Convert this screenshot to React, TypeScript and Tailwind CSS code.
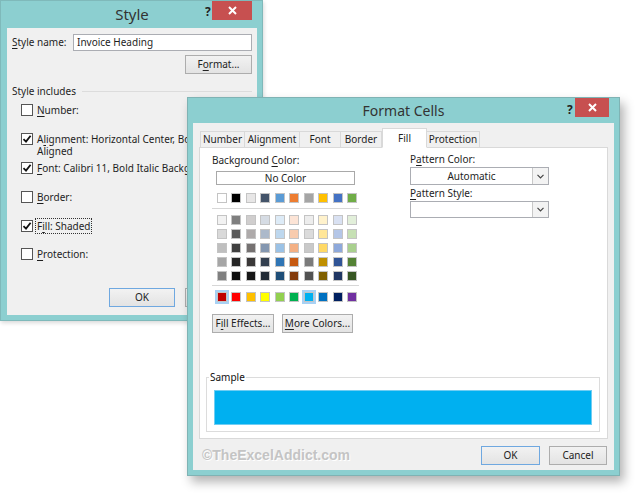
import type { ReactNode } from 'react';

// mnemonic letter
const U = ({ children }: { children: ReactNode }) => (
  <span className="underline decoration-1 underline-offset-[2px]">{children}</span>
);

const themeTop = ['#FFFFFF', '#000000', '#E7E6E6', '#44546A', '#5B9BD5', '#ED7D31', '#A5A5A5', '#FFC000', '#4472C4', '#70AD47'];
const themeShades = [
  ['#F2F2F2', '#7F7F7F', '#D0CECE', '#D6DCE4', '#DDEBF7', '#FCE4D6', '#EDEDED', '#FFF2CC', '#D9E1F2', '#E2EFDA'],
  ['#D9D9D9', '#595959', '#AEAAAA', '#ACB9CA', '#BDD7EE', '#F8CBAD', '#DBDBDB', '#FFE699', '#B4C6E7', '#C6E0B4'],
  ['#BFBFBF', '#404040', '#757171', '#8497B0', '#9BC2E6', '#F4B084', '#C9C9C9', '#FFD966', '#8EA9DB', '#A9D08E'],
  ['#A6A6A6', '#262626', '#3A3838', '#333F4F', '#2F75B5', '#C65911', '#7B7B7B', '#BF8F00', '#305496', '#548235'],
  ['#808080', '#0D0D0D', '#161616', '#222B35', '#1F4E78', '#833C0C', '#525252', '#806000', '#203764', '#375623'],
];
const standard = ['#C00000', '#FF0000', '#FFC000', '#FFFF00', '#92D050', '#00B050', '#00B0F0', '#0070C0', '#002060', '#7030A0'];

function Swatch({ color, selected }: { color: string; selected?: boolean }) {
  return (
    <div
      className={`w-[10px] h-[10px] border border-[#c4c4c4] ${selected ? 'ring-2 ring-[#a8d1f4]' : ''}`}
      style={{ backgroundColor: color }}
    />
  );
}

function SwatchRow({ colors, selected = [] }: { colors: string[]; selected?: number[] }) {
  return (
    <div className="flex justify-between w-[140px] ml-[5px]">
      {colors.map((c, i) => (
        <Swatch key={i} color={c} selected={selected.includes(i)} />
      ))}
    </div>
  );
}

function Btn({ children, w, primary }: { children: ReactNode; w: string; primary?: boolean }) {
  return (
    <div
      className={`${w} h-[19px] flex items-center justify-center whitespace-nowrap bg-gradient-to-b from-[#f2f2f2] to-[#e3e3e3] border ${
        primary ? 'border-[#6fa8e0]' : 'border-[#adadad]'
      } text-[#222]`}
    >
      {children}
    </div>
  );
}

function CheckBox({ checked }: { checked?: boolean }) {
  return (
    <div className="w-[12px] h-[12px] shrink-0 border border-[#555] bg-white flex items-center justify-center">
      {checked && (
        <svg width="10" height="10" viewBox="0 0 10 10">
          <path d="M1.5 5.2 L4 7.6 L8.6 1.8" fill="none" stroke="#111" strokeWidth="1.8" />
        </svg>
      )}
    </div>
  );
}

function CloseButton({ w }: { w: string }) {
  return (
    <div className={`absolute right-[5px] top-0 ${w} h-[19px] bg-[#c75050] flex items-center justify-center`}>
      <svg width="9" height="9" viewBox="0 0 9 9">
        <path d="M1 1 L8 8 M8 1 L1 8" stroke="#fff" strokeWidth="2" />
      </svg>
    </div>
  );
}

function Select({ value, h }: { value?: string; h: string }) {
  return (
    <div className={`w-[139px] ${h} flex bg-white border border-[#abadb3]`}>
      <div className="flex-1 flex items-center justify-center">{value}</div>
      <div className="w-[16px] border-l border-[#c8c8c8] bg-[#f3f3f3] flex items-center justify-center">
        <svg width="7" height="5" viewBox="0 0 7 5">
          <path d="M0.5 0.8 L3.5 3.8 L6.5 0.8" fill="none" stroke="#444" strokeWidth="1.2" />
        </svg>
      </div>
    </div>
  );
}

function StyleDialog() {
  const rows: { label: ReactNode; checked?: boolean; mt: string; focus?: boolean }[] = [
    { label: <><U>N</U>umber:</>, mt: 'mt-[6px]' },
    { label: <>A<U>l</U>ignment: Horizontal Center, Bottom<br />Aligned</>, checked: true, mt: 'mt-[17px]' },
    { label: <><U>F</U>ont: Calibri 11, Bold Italic Background 2</>, checked: true, mt: 'mt-[5px]' },
    { label: <><U>B</U>order:</>, mt: 'mt-[17px]' },
    { label: <>F<U>i</U>ll: Shaded</>, checked: true, mt: 'mt-[17px]', focus: true },
    { label: <><U>P</U>rotection:</>, mt: 'mt-[16px]' },
  ];
  return (
    <div className="absolute left-0 top-0 w-[263px] h-[321px] border border-[#7fb9ba] bg-[#8ccfd0] pl-[6px] pr-[5px] pb-[5px] shadow-[1px_2px_4px_rgba(0,0,0,0.15)]">
      <div className="relative h-[27px] flex items-center justify-center text-[15px] text-[#333]">
        Style
        <span className="absolute left-[198px] top-[2px] text-[12px] font-bold text-[#222]">?</span>
        <CloseButton w="w-[40px]" />
      </div>
      <div className="h-[287px] bg-[#f0f0f0] pt-[6px] pl-[5px] pr-[5px] overflow-hidden">
        <div className="flex items-center h-[17px]">
          <div className="w-[61px]"><U>S</U>tyle name:</div>
          <div className="w-[179px] h-[17px] border border-[#abadb3] bg-white px-[3px] flex items-center">Invoice Heading</div>
        </div>
        <div className="flex justify-end mt-[4px]">
          <Btn w="w-[67px]">F<U>o</U>rmat...</Btn>
        </div>
        <div className="mt-[10px] h-[14px] flex items-center">
          <span>Style includes</span>
          <div className="flex-1 h-px bg-[#dcdcdc] ml-[6px]" />
        </div>
        {rows.map((r, i) => (
          <div key={i} className={`${r.mt} flex items-start pl-[9px] leading-[12px] whitespace-nowrap`}>
            <CheckBox checked={r.checked} />
            <div className={`ml-[3px] px-px ${r.focus ? 'outline outline-1 outline-dotted outline-[#333] -my-px py-px' : ''}`}>
              {r.label}
            </div>
          </div>
        ))}
        <div className="mt-[28px] flex gap-[10px] pl-[97px]">
          <Btn w="w-[66px]" primary>OK</Btn>
          <Btn w="w-[67px]">Cancel</Btn>
        </div>
      </div>
    </div>
  );
}

function FormatCellsDialog() {
  const tabs = [
    { name: 'Number', w: 'w-[45px]' },
    { name: 'Alignment', w: 'w-[56px]' },
    { name: 'Font', w: 'w-[42px]' },
    { name: 'Border', w: 'w-[42px]' },
    { name: 'Fill', w: 'w-[45px]', active: true },
    { name: 'Protection', w: 'w-[54px]' },
  ];
  return (
    <div className="absolute left-[187px] top-[97px] w-[433px] h-[379px] border border-[#7fb3b4] bg-[#8ccfd0] px-[5px] pb-[5px] shadow-[4px_6px_10px_rgba(0,0,0,0.3)]">
      <div className="relative h-[25px] flex items-center justify-center text-[14px] text-[#333]">
        Format Cells
        <span className="absolute left-[374px] top-[3px] text-[12px] font-bold text-[#222]">?</span>
        <CloseButton w="w-[34px]" />
      </div>
      <div className="h-[347px] bg-[#f0f0f0] pt-[5px]">
        {/* tabs */}
        <div className="ml-[7px] h-[19px] flex items-end relative z-10">
          {tabs.map((t) => (
            <div
              key={t.name}
              className={`${t.w} flex items-center justify-center border border-[#d9d9d9] ${
                t.active ? 'h-[20px] bg-white border-b-white -mb-px' : 'h-[16px] bg-[#f0f0f0] border-b-0 -ml-px first:ml-0'
              }`}
            >
              {t.name}
            </div>
          ))}
        </div>
        {/* panel */}
        <div className="mx-[6px] h-[292px] bg-white border border-[#d9d9d9] flex flex-col">
          <div className="h-[229px] flex">
            <div className="w-[210px] pl-[12px]">
              <div className="mt-[5px] h-[14px] leading-[14px]">Background <U>C</U>olor:</div>
              <div className="mt-[4px] ml-[4px] w-[139px] h-[14px] border border-[#a9a9a9] flex items-center justify-center">No Color</div>
              <div className="mt-[8px]"><SwatchRow colors={themeTop} /></div>
              <div className="mt-[5px] w-[147px] h-px bg-[#d7d7d7]" />
              <div className="mt-[6px] flex flex-col gap-[4px]">
                {themeShades.map((row, i) => (
                  <SwatchRow key={i} colors={row} />
                ))}
              </div>
              <div className="mt-[4px] w-[147px] h-px bg-[#d7d7d7]" />
              <div className="mt-[6px]"><SwatchRow colors={standard} selected={[0, 6]} /></div>
              <div className="mt-[12px] flex gap-[8px]">
                <Btn w="w-[62px]">F<U>i</U>ll Effects...</Btn>
                <Btn w="w-[71px]"><U>M</U>ore Colors...</Btn>
              </div>
            </div>
            <div className="flex-1">
              <div className="mt-[4px] h-[14px] leading-[14px]">P<U>a</U>ttern Color:</div>
              <div className="mt-[1px]"><Select value="Automatic" h="h-[18px]" /></div>
              <div className="mt-[1px] h-[14px] leading-[14px]"><U>P</U>attern Style:</div>
              <div className="mt-[1px]"><Select h="h-[17px]" /></div>
            </div>
          </div>
          <div className="relative ml-[6px] w-[394px] h-[55px] border border-[#dcdcdc]">
            <span className="absolute -top-[8px] left-[2px] bg-white px-[1px] leading-[14px] text-[#111]">Sample</span>
            <div className="mt-[12px] ml-[7px] w-[378px] h-[35px] bg-[#00b0f0] border border-[#6fcdf3]" />
          </div>
        </div>
        {/* footer */}
        <div className="mt-[7px] flex items-center h-[18px]">
          <div className="pl-[9px] w-[288px] font-['Liberation_Sans',sans-serif] font-bold text-[14px] text-[#c4c4c4] [text-shadow:1px_1px_0_#ffffff]">
            ©TheExcelAddict.com
          </div>
          <Btn w="w-[59px]" primary>OK</Btn>
          <div className="ml-[9px]"><Btn w="w-[58px]">Cancel</Btn></div>
        </div>
      </div>
    </div>
  );
}

export default function App() {
  return (
    <div className="relative w-[641px] h-[498px] bg-white overflow-hidden font-['Noto_Sans',sans-serif] text-[10px] text-[#1e1e1e]">
      <StyleDialog />
      <FormatCellsDialog />
    </div>
  );
}
